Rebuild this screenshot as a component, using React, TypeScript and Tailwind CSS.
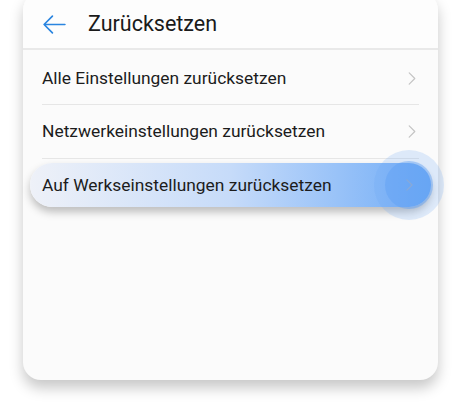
import React from 'react';

const Chevron: React.FC<{ className?: string }> = ({ className }) => (
  <svg viewBox="0 0 8 14" className={className} fill="none" stroke="currentColor" strokeWidth="1.3" strokeLinecap="round" strokeLinejoin="round">
    <path d="M1 1l6 6-6 6" />
  </svg>
);

const rows = ['Alle Einstellungen zurücksetzen', 'Netzwerkeinstellungen zurücksetzen'];

export default function App() {
  return (
    <div className="w-[465px] h-[404px] bg-white overflow-hidden" style={{ fontFamily: 'Roboto, "Noto Sans", sans-serif' }}>
      <div className="ml-[23px] mt-[-8px] w-[415px] h-[388px] rounded-[18px] bg-[#fbfbfb] shadow-[0_8px_14px_rgba(0,0,0,0.22)] flex flex-col">
        <div className="h-[58px] pt-[9px] flex items-center border-b-2 border-[#e9e9e9] bg-[#fdfdfd] rounded-t-[18px]">
          <svg viewBox="0 0 24 24" className="ml-[19px] w-[25px] h-[25px] text-[#2a85e0]" fill="none" stroke="currentColor" strokeWidth="1.6" strokeLinecap="round" strokeLinejoin="round">
            <path d="M22 12H2M10 4l-8 8 8 8" />
          </svg>
          <span className="ml-[21px] text-[21.5px] text-[#1a1a1a]">Zurücksetzen</span>
        </div>
        {rows.map((r, i) => (
          <div key={r} className={`mx-[19px] flex items-center justify-between border-b border-[#e6e6e6] ${i === 0 ? 'h-[55px] pt-[2px]' : 'h-[54px]'}`}>
            <span className="text-[17.4px] text-[#1c1c1c]">{r}</span>
            <Chevron className="w-[8px] h-[13px] mr-[3px] text-[#c4c4c4]" />
          </div>
        ))}
        <div className="mt-[4px] mx-[7px] h-[44px] relative rounded-full bg-gradient-to-r from-[#eef1f8] via-[#c6dbf9] to-[#70acf6] shadow-[0_5px_8px_rgba(0,0,0,0.25)] flex items-center">
          <span className="ml-[12px] text-[17.4px] text-[#1c1c1c]">Auf Werkseinstellungen zurücksetzen</span>
          <div className="absolute right-[-13px] top-1/2 -translate-y-1/2 w-[70px] h-[70px] rounded-full bg-[#6aa6f6]/20 flex items-center justify-center">
            <div className="w-[48px] h-[48px] rounded-full bg-[#5f9ff5]/45 flex items-center justify-center">
              <Chevron className="w-[7px] h-[12px] text-[#8aa9d6]" />
            </div>
          </div>
        </div>
      </div>
    </div>
  );
}
